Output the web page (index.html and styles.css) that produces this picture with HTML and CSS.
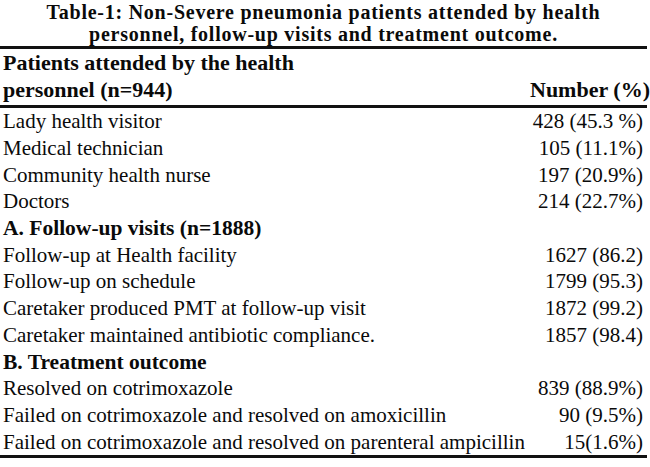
FILE: index.html
```html
<!DOCTYPE html>
<html>
<head>
<meta charset="utf-8">
<link rel="stylesheet" href="styles.css">
</head>
<body>
<div class="page">
  <h1 class="title">Table-1: Non-Severe pneumonia patients attended by health<br>personnel, follow-up visits and treatment outcome.</h1>
  <table class="data">
    <colgroup><col class="col-lbl"><col class="col-num"></colgroup>
    <thead>
      <tr class="head1"><th class="lbl">Patients attended by the health</th><th class="num"></th></tr>
      <tr class="head2"><th class="lbl">personnel (n=944)</th><th class="num">Number (%)</th></tr>
    </thead>
    <tbody>
      <tr class="first"><td class="lbl">Lady health visitor</td><td class="num">428 (45.3 %)</td></tr>
      <tr><td class="lbl">Medical technician</td><td class="num">105 (11.1%)</td></tr>
      <tr><td class="lbl">Community health nurse</td><td class="num">197 (20.9%)</td></tr>
      <tr><td class="lbl">Doctors</td><td class="num">214 (22.7%)</td></tr>
      <tr class="section"><td class="lbl">A. Follow-up visits (n=1888)</td><td class="num"></td></tr>
      <tr><td class="lbl">Follow-up at Health facility</td><td class="num">1627 (86.2)</td></tr>
      <tr><td class="lbl">Follow-up on schedule</td><td class="num">1799 (95.3)</td></tr>
      <tr><td class="lbl">Caretaker produced PMT at follow-up visit</td><td class="num">1872 (99.2)</td></tr>
      <tr><td class="lbl">Caretaker maintained antibiotic compliance.</td><td class="num">1857 (98.4)</td></tr>
      <tr class="section"><td class="lbl">B. Treatment outcome</td><td class="num"></td></tr>
      <tr><td class="lbl">Resolved on cotrimoxazole</td><td class="num">839 (88.9%)</td></tr>
      <tr><td class="lbl">Failed on cotrimoxazole and resolved on amoxicillin</td><td class="num">90 (9.5%)</td></tr>
      <tr class="last"><td class="lbl">Failed on cotrimoxazole and resolved on parenteral ampicillin</td><td class="num">15(1.6%)</td></tr>
    </tbody>
  </table>
</div>
</body>
</html>
```
FILE: styles.css
```css
html, body {
  margin: 0;
  padding: 0;
  background: #ffffff;
}
.page {
  width: 647px;
  font-family: "Liberation Serif", "Times New Roman", serif;
  color: #0a0a0a;
}
.title {
  margin: 0;
  padding-top: 1px;
  height: 45px;
  font-size: 20px;
  font-weight: bold;
  line-height: 22px;
  letter-spacing: 0.75px;
  text-align: center;
}
.data {
  width: 647px;
  table-layout: fixed;
  border-collapse: collapse;
  font-size: 21px;
}
.col-lbl {
  width: 530px;
}
.col-num {
  width: 117px;
}
.data th, .data td {
  padding: 0 4px 0 3px;
  height: 26.7px;
  line-height: 26px;
  white-space: nowrap;
  overflow: visible;
}
.data th {
  font-weight: bold;
  text-align: left;
  font-size: 22px;
}
.data .num {
  text-align: right;
  padding-left: 0;
}
.head1 th {
  border-top: 3px solid #111111;
  height: 27px;
  line-height: 27px;
}
.head2 th {
  border-bottom: 3px solid #111111;
  height: 29px;
  line-height: 27px;
  vertical-align: top;
}
.section td {
  font-weight: bold;
  font-size: 21.5px;
}
.last td {
  border-bottom: 3px solid #111111;
}
```
